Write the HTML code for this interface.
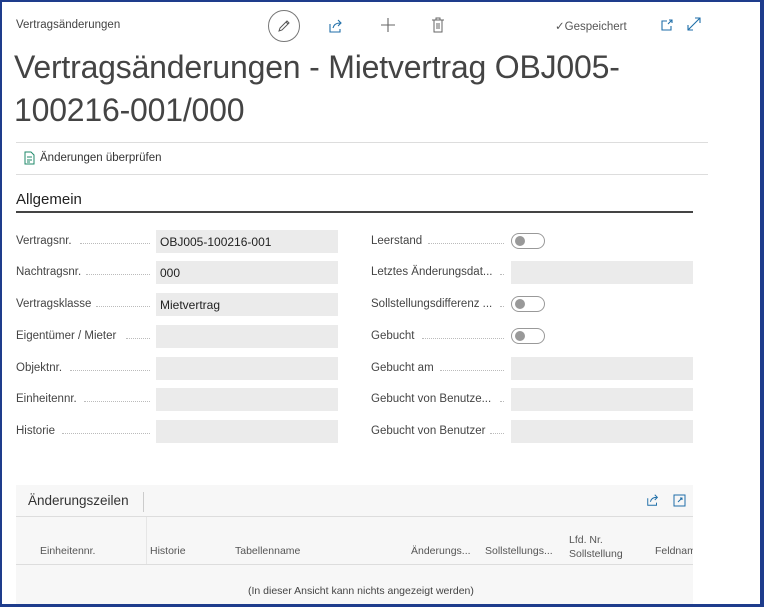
<!DOCTYPE html>
<html><head><meta charset="utf-8"><style>
*{margin:0;padding:0;box-sizing:border-box}
body{width:764px;height:607px;overflow:hidden;background:#fff;font-family:"Liberation Sans",sans-serif;color:#333;position:relative}
.frame{position:absolute;inset:0;border:2px solid #1e3c8c;border-right-width:4px;border-bottom-width:3px;pointer-events:none;z-index:10}
.a{position:absolute;white-space:nowrap}
.lbl{font-size:11.5px;color:#444}
.dots{position:absolute;border-bottom:1px dotted #bbb;height:1px}
.inp{position:absolute;background:#ebebeb;height:23px;font-size:12px;padding:5px 4px;color:#222}
.tg{position:absolute;width:34px;height:16px;border:1px solid #999;border-radius:8px}
.tg:after{content:"";position:absolute;left:3px;top:2px;width:10px;height:10px;border-radius:50%;background:#999}
.ch{font-size:10.5px;color:#555}
</style></head><body>
<div class="frame"></div>
<div class="a" style="left:16px;top:19px;font-size:11.5px;color:#444">Vertragsänderungen</div>
<div class="a" style="left:268px;top:10px;width:32px;height:32px;border:1px solid #777;border-radius:50%"></div>
<svg class="a" style="left:276px;top:18px" width="16" height="16" viewBox="0 0 16 16"><path d="M3 13 L4 10 L11 3 L13 5 L6 12 Z M10 4 L12 6" fill="none" stroke="#555" stroke-width="1"/></svg>
<svg class="a" style="left:328px;top:18px" width="16" height="16" viewBox="0 0 16 16"><path d="M2 6 V14 H12 V11 M5 10 C6 6 9 5 12 5 M10 2 L13 5 L10 8" fill="none" stroke="#1f6ea8" stroke-width="1.1"/></svg>
<svg class="a" style="left:380px;top:17px" width="16" height="16" viewBox="0 0 16 16"><path d="M8 1 V15 M1 8 H15" stroke="#666" stroke-width="1.1"/></svg>
<svg class="a" style="left:431px;top:17px" width="14" height="16" viewBox="0 0 14 16"><path d="M1 3 H13 M5 3 V1 H9 V3 M3 3 V15 H11 V3 M6 6 V12 M8 6 V12" fill="none" stroke="#666" stroke-width="1"/></svg>
<div class="a" style="left:555px;top:19px;font-size:11.5px;color:#555">✓Gespeichert</div>
<svg class="a" style="left:660px;top:18px" width="14" height="14" viewBox="0 0 14 14"><path d="M7 3 H2 V12 H11 V8 M9 2 H12 V5 M12 2 L8 6" fill="none" stroke="#1f6ea8" stroke-width="1.1"/></svg>
<svg class="a" style="left:687px;top:17px" width="14" height="14" viewBox="0 0 14 14"><path d="M1 13 L13 1 M8 1 H13 V6 M1 8 V13 H6" fill="none" stroke="#1f6ea8" stroke-width="1.1"/></svg>
<div class="a" style="left:14px;top:46px;font-size:32px;line-height:43px;color:#444;letter-spacing:-0.2px">Vertragsänderungen - Mietvertrag OBJ005-<br>100216-001/000</div>
<div class="a" style="left:16px;top:142px;width:692px;height:1px;background:#ddd"></div>
<svg class="a" style="left:24px;top:151px" width="11" height="14" viewBox="0 0 11 14"><path d="M1 1 H7 L10 4 V13 H1 Z M3 6 H8 M3 9 H8 M3 11 H6" fill="none" stroke="#1f8a6a" stroke-width="1"/></svg>
<div class="a" style="left:40px;top:152px;font-size:11.5px;color:#333">Änderungen überprüfen</div>
<div class="a" style="left:16px;top:174px;width:692px;height:1px;background:#ddd"></div>
<div class="a" style="left:16px;top:191px;font-size:15px;color:#222">Allgemein</div>
<div class="a" style="left:16px;top:211px;width:677px;height:2px;background:#444"></div>

<div class="a lbl" style="left:16px;top:235px">Vertragsnr.</div><div class="dots" style="left:80px;width:70px;top:243px"></div><div class="inp" style="left:156px;top:230px;width:182px">OBJ005-100216-001</div>
<div class="a lbl" style="left:16px;top:266px">Nachtragsnr.</div><div class="dots" style="left:86px;width:64px;top:274px"></div><div class="inp" style="left:156px;top:261px;width:182px">000</div>
<div class="a lbl" style="left:16px;top:298px">Vertragsklasse</div><div class="dots" style="left:96px;width:54px;top:306px"></div><div class="inp" style="left:156px;top:293px;width:182px">Mietvertrag</div>
<div class="a lbl" style="left:16px;top:330px">Eigentümer / Mieter</div><div class="dots" style="left:126px;width:24px;top:338px"></div><div class="inp" style="left:156px;top:325px;width:182px"></div>
<div class="a lbl" style="left:16px;top:362px">Objektnr.</div><div class="dots" style="left:70px;width:80px;top:370px"></div><div class="inp" style="left:156px;top:357px;width:182px"></div>
<div class="a lbl" style="left:16px;top:393px">Einheitennr.</div><div class="dots" style="left:84px;width:66px;top:401px"></div><div class="inp" style="left:156px;top:388px;width:182px"></div>
<div class="a lbl" style="left:16px;top:425px">Historie</div><div class="dots" style="left:62px;width:88px;top:433px"></div><div class="inp" style="left:156px;top:420px;width:182px"></div>

<div class="a lbl" style="left:371px;top:235px">Leerstand</div><div class="dots" style="left:428px;width:76px;top:243px"></div><div class="tg" style="left:511px;top:233px"></div>
<div class="a lbl" style="left:371px;top:266px">Letztes Änderungsdat...</div><div class="dots" style="left:500px;width:4px;top:274px"></div><div class="inp" style="left:511px;top:261px;width:182px"></div>
<div class="a lbl" style="left:371px;top:298px">Sollstellungsdifferenz ...</div><div class="dots" style="left:500px;width:4px;top:306px"></div><div class="tg" style="left:511px;top:296px"></div>
<div class="a lbl" style="left:371px;top:330px">Gebucht</div><div class="dots" style="left:422px;width:82px;top:338px"></div><div class="tg" style="left:511px;top:328px"></div>
<div class="a lbl" style="left:371px;top:362px">Gebucht am</div><div class="dots" style="left:440px;width:64px;top:370px"></div><div class="inp" style="left:511px;top:357px;width:182px"></div>
<div class="a lbl" style="left:371px;top:393px">Gebucht von Benutze...</div><div class="dots" style="left:500px;width:4px;top:401px"></div><div class="inp" style="left:511px;top:388px;width:182px"></div>
<div class="a lbl" style="left:371px;top:425px">Gebucht von Benutzer</div><div class="dots" style="left:490px;width:14px;top:433px"></div><div class="inp" style="left:511px;top:420px;width:182px"></div>

<div class="a" style="left:16px;top:485px;width:677px;height:122px;background:#f7f7f7"></div>
<div class="a" style="left:28px;top:493px;font-size:13.5px;color:#333">Änderungszeilen</div>
<div class="a" style="left:143px;top:492px;width:1px;height:20px;background:#ccc"></div>
<svg class="a" style="left:646px;top:493px" width="14" height="14" viewBox="0 0 16 16"><path d="M2 6 V14 H12 V11 M5 10 C6 6 9 5 12 5 M10 2 L13 5 L10 8" fill="none" stroke="#1f6ea8" stroke-width="1.1"/></svg>
<svg class="a" style="left:673px;top:494px" width="13" height="13" viewBox="0 0 13 13"><path d="M1 1 H12 V12 H1 Z M7 4 H9 V6 M9 4 L5 8" fill="none" stroke="#1f6ea8" stroke-width="1"/></svg>
<div class="a" style="left:16px;top:516px;width:677px;height:1px;background:#ddd"></div>
<div class="a" style="left:146px;top:517px;width:1px;height:47px;background:#e6e6e6"></div>
<div class="a ch" style="left:40px;top:545px">Einheitennr.</div>
<div class="a ch" style="left:150px;top:545px">Historie</div>
<div class="a ch" style="left:235px;top:545px">Tabellenname</div>
<div class="a ch" style="left:411px;top:545px">Änderungs...</div>
<div class="a ch" style="left:485px;top:545px">Sollstellungs...</div>
<div class="a ch" style="left:569px;top:533px;line-height:14px">Lfd. Nr.<br>Sollstellung</div>
<div class="a ch" style="left:655px;top:545px;width:38px;overflow:hidden">Feldname</div>
<div class="a" style="left:16px;top:564px;width:677px;height:1px;background:#ddd"></div>
<div class="a" style="left:248px;top:585px;font-size:10.5px;color:#444">(In dieser Ansicht kann nichts angezeigt werden)</div>
</body></html>
